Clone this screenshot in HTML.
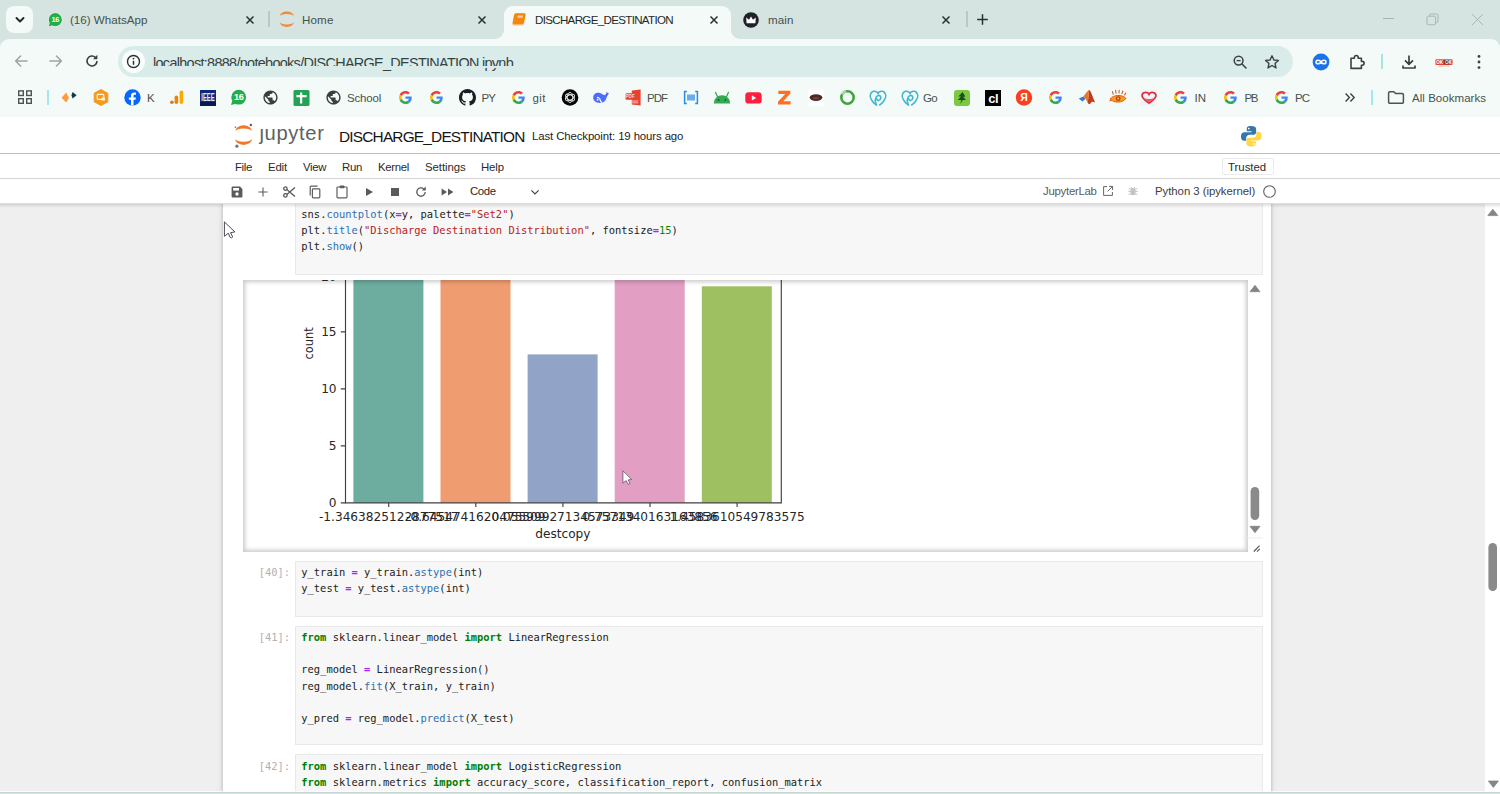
<!DOCTYPE html>
<html lang="en">
<head>
<meta charset="utf-8">
<title>DISCHARGE_DESTINATION</title>
<style>
*{box-sizing:border-box;margin:0;padding:0}
html,body{width:1500px;height:794px;overflow:hidden;background:#fff}
body{position:relative;font-family:"Liberation Sans",sans-serif;color:#1f1f1f}
.abs{position:absolute}
#tabstrip,#navbar,#urlpill,.bm,#page,.tab{opacity:.999}
/* ---------- browser chrome ---------- */
#tabstrip{position:absolute;left:0;top:0;width:1500px;height:50px;background:#d5e4e0}
#navbar{position:absolute;left:0;top:39px;width:1500px;height:41px;background:#f4faf8;border-radius:9px 9px 0 0}
#bmbar{position:absolute;left:0;top:80px;width:1500px;height:36px;background:#f4faf8}
.tab{position:absolute;top:0;height:39px;font-size:11.6px;color:#44514e;white-space:nowrap}
.tab .t{position:absolute;top:12px;left:0;line-height:15px}
.tx{position:absolute;top:13px;width:14px;height:14px}
#urlpill{position:absolute;left:118px;top:45.500px;width:1175px;height:31.500px;border-radius:16px;background:#d9ecea}
.bm{position:absolute;top:89.5px;font-size:11.5px;line-height:16px;color:#46524f;white-space:nowrap}
.ico{position:absolute;display:block}
/* ---------- jupyter ---------- */
#page{position:absolute;left:0;top:116px;width:1500px;height:678px;background:#fff}
#jhead{position:absolute;left:0;top:0;width:1500px;height:38px;background:#fff;border-bottom:1px solid #bdbdbd}
#jmenu{position:absolute;left:0;top:38px;width:1500px;height:25px;background:#fff;border-bottom:1px solid #d5d5d5}
#jtool{position:absolute;left:0;top:63px;width:1500px;height:25px;background:#fff}
#jmain{position:absolute;left:0;top:88px;width:1500px;height:590px;background:#efefef;overflow:hidden}
.mi{position:absolute;top:6px;font-size:11.4px;line-height:15px;color:#2a2a2a}
#nb{position:absolute;left:223px;top:0;width:1048px;height:590px;background:#fff;box-shadow:0 0 2px 1px rgba(0,0,0,.10),0 0 6px 1px rgba(0,0,0,.10)}
.code{position:absolute;left:72px;width:967.600px;background:#f7f7f7;border:1px solid #e9e9e9}
pre{font-family:"DejaVu Sans Mono","Liberation Mono",monospace;font-size:10.43px;line-height:16.050px;color:#212121;white-space:pre}
.code pre{position:absolute;left:5.300px}
.prompt{position:absolute;left:0;width:67px;text-align:right;font-family:"DejaVu Sans Mono","Liberation Mono",monospace;font-size:10.43px;line-height:16.050px;color:#b0b0b0}
.k{color:#008000;font-weight:bold}.o{color:#aa22ff;font-weight:bold}.f{color:#2c6fb3}.s{color:#ba2121}.n{color:#080}
</style>
</head>
<body>
<!-- TABSTRIP -->
<div id="tabstrip">
  <div class="abs" style="left:6px;top:6px;width:27px;height:27px;border-radius:8px;background:#f4faf8"></div>
  <svg class="ico" style="left:14px;top:14px" width="12" height="12" viewBox="0 0 12 12"><path d="M2.5 4 L6 7.5 L9.5 4" fill="none" stroke="#1f2a28" stroke-width="1.9" stroke-linecap="round" stroke-linejoin="round"/></svg>
  <!-- tab 1 -->
  <svg class="ico" style="left:47px;top:12px" width="16" height="16" viewBox="0 0 16 16"><path d="M1 15 L2.2 11 A7 7 0 1 1 5 13.8 Z" fill="#fff"/><circle cx="8.3" cy="7.7" r="6.6" fill="#1fae4b"/><path d="M1.6 14.4 L2.8 10.6 L5.4 13.3 Z" fill="#1fae4b"/><text x="8.3" y="10.3" font-family="Liberation Sans,sans-serif" font-size="7.4" font-weight="bold" fill="#fff" text-anchor="middle" letter-spacing="-0.4">16</text></svg>
  <div class="tab" style="left:70px"><span class="t" id="t1">(16) WhatsApp</span></div>
  <svg class="tx" style="left:243px" viewBox="0 0 14 14"><path d="M3.5 3.5 L10.5 10.5 M10.5 3.5 L3.5 10.5" stroke="#27312f" stroke-width="1.5" fill="none"/></svg>
  <div class="abs" style="left:268px;top:11px;width:1.500px;height:16px;background:#b9c8c4"></div>
  <!-- tab 2 -->
  <svg class="ico" style="left:279px;top:11px" width="16" height="17" viewBox="0 0 16 17"><path d="M0.700 5.600 A7.100 5 0 0 1 14.900 5.600 A7.100 2.600 0 0 0 0.700 5.600 Z" fill="#f38a3a"/><path d="M0.700 10.800 A7.100 5.100 0 0 0 14.900 10.800 A7.100 2.700 0 0 1 0.700 10.800 Z" fill="#f38a3a"/></svg>
  <div class="tab" style="left:302px"><span class="t" id="t2" style="letter-spacing:0.14px;">Home</span></div>
  <svg class="tx" style="left:475px" viewBox="0 0 14 14"><path d="M3.5 3.5 L10.5 10.5 M10.5 3.5 L3.5 10.5" stroke="#27312f" stroke-width="1.5" fill="none"/></svg>
  <!-- active tab -->
  <div class="abs" style="left:504px;top:6px;width:227px;height:34px;background:#f4faf8;border-radius:9px 9px 0 0"></div>
  <svg class="ico" style="left:495px;top:30px" width="9" height="9" viewBox="0 0 9 9"><path d="M9 0 V9 H0 A9 9 0 0 0 9 0 Z" fill="#f4faf8"/></svg>
  <svg class="ico" style="left:731px;top:30px" width="9" height="9" viewBox="0 0 9 9"><path d="M0 0 V9 H9 A9 9 0 0 1 0 0 Z" fill="#f4faf8"/></svg>
  <svg class="ico" style="left:511px;top:12px" width="16" height="16" viewBox="0 0 16 16"><g transform="translate(1.100 0) skewX(-11)"><rect x="2.600" y="1.200" width="11.400" height="12.400" rx="1.700" fill="#f9c48a"/><rect x="2.600" y="1.200" width="11.400" height="11" rx="1.700" fill="#f5870f"/><rect x="6.400" y="3.400" width="5.200" height="2.400" rx="0.500" fill="#fbd2a4"/></g></svg>
  <div class="tab" style="left:535px;color:#1f2a28"><span class="t" id="t3" style="letter-spacing:-0.69px;">DISCHARGE_DESTINATION</span></div>
  <svg class="tx" style="left:707px" viewBox="0 0 14 14"><path d="M3.5 3.5 L10.5 10.5 M10.5 3.5 L3.5 10.5" stroke="#27312f" stroke-width="1.5" fill="none"/></svg>
  <!-- tab 4 -->
  <svg class="ico" style="left:743px;top:12px" width="16" height="16" viewBox="0 0 16 16"><circle cx="8" cy="8" r="7.8" fill="#20222b"/><path d="M3.6 11.2 L3.2 5.6 L6 7.8 L8 4.4 L10 7.8 L12.8 5.6 L12.4 11.2 Z" fill="#fff"/></svg>
  <div class="tab" style="left:768px"><span class="t" id="t4" style="letter-spacing:0.09px;">main</span></div>
  <svg class="tx" style="left:939px" viewBox="0 0 14 14"><path d="M3.5 3.5 L10.5 10.5 M10.5 3.5 L3.5 10.5" stroke="#27312f" stroke-width="1.5" fill="none"/></svg>
  <div class="abs" style="left:966px;top:11px;width:1.500px;height:16px;background:#b9c8c4"></div>
  <svg class="ico" style="left:975px;top:12px" width="15" height="15" viewBox="0 0 15 15"><path d="M7.5 2.2 V12.8 M2.2 7.5 H12.8" stroke="#27312f" stroke-width="1.5" fill="none"/></svg>
  <!-- window controls -->
  <div class="abs" style="left:1383px;top:18px;width:11px;height:1px;background:#a9b5b2"></div>
  <svg class="ico" style="left:1426px;top:13px" width="13" height="13" viewBox="0 0 13 13"><rect x="1" y="3.2" width="8.6" height="8.6" rx="1.6" fill="none" stroke="#a9b5b2" stroke-width="1"/><path d="M3.4 3.2 V2.6 A1.6 1.6 0 0 1 5 1 H10.4 A1.6 1.6 0 0 1 12 2.6 V8 A1.6 1.6 0 0 1 10.4 9.6 H9.8" fill="none" stroke="#a9b5b2" stroke-width="1"/></svg>
  <svg class="ico" style="left:1471px;top:13px" width="13" height="13" viewBox="0 0 13 13"><path d="M1 1 L12 12 M12 1 L1 12" stroke="#a9b5b2" stroke-width="1" fill="none"/></svg>
</div>
<!-- NAVBAR -->
<div id="navbar">
  <svg class="ico" style="left:13px;top:14px" width="16" height="16" viewBox="0 0 16 16"><path d="M14 8 H2.6 M7.6 3 L2.6 8 L7.6 13" fill="none" stroke="#9aa6a3" stroke-width="1.5" stroke-linecap="round" stroke-linejoin="round"/></svg>
  <svg class="ico" style="left:48px;top:14px" width="16" height="16" viewBox="0 0 16 16"><path d="M2 8 H13.4 M8.4 3 L13.4 8 L8.4 13" fill="none" stroke="#9aa6a3" stroke-width="1.5" stroke-linecap="round" stroke-linejoin="round"/></svg>
  <svg class="ico" style="left:84px;top:14px" width="16" height="16" viewBox="0 0 16 16"><path d="M13 8 A5 5 0 1 1 11.4 4.3" fill="none" stroke="#39423f" stroke-width="1.6"/><path d="M13.4 1.8 V6.2 H9 Z" fill="#39423f"/></svg>
  <!-- right icons -->
  <svg class="ico" style="left:1311.500px;top:14px" width="18" height="18" viewBox="0 0 18 18"><circle cx="9" cy="9" r="8.4" fill="#1a73e8"/><path d="M9 9 C7.6 6.6 4 6.6 4 9 C4 11.4 7.6 11.4 9 9 C10.4 6.6 14 6.6 14 9 C14 11.4 10.4 11.4 9 9 Z" fill="none" stroke="#fff" stroke-width="1.5"/></svg>
  <svg class="ico" style="left:1347.500px;top:14px" width="18" height="18" viewBox="0 0 18 18"><path d="M3 5.2 H6.4 V4.4 A1.9 1.9 0 0 1 10.2 4.4 V5.2 H13.4 V8.4 H14.2 A1.9 1.9 0 0 1 14.2 12.2 H13.4 V15.4 H3 Z" fill="none" stroke="#39423f" stroke-width="1.6" stroke-linejoin="round"/></svg>
  <div class="abs" style="left:1380.500px;top:15px;width:2px;height:15px;background:#a6e6e1"></div>
  <svg class="ico" style="left:1399.500px;top:14px" width="18" height="18" viewBox="0 0 18 18"><path d="M9 2.4 V11 M5 7.4 L9 11.4 L13 7.4 M3 12.6 V15 H15 V12.6" fill="none" stroke="#39423f" stroke-width="1.7" stroke-linejoin="round"/></svg>
  <svg class="ico" style="left:1434.500px;top:18.500px" width="18" height="9" viewBox="0 0 20 10"><rect x="0.5" y="1.4" width="19" height="6.4" rx="1" fill="#e8452f"/><rect x="10.4" y="2.2" width="5.4" height="4.8" fill="#30302f"/><text x="1.4" y="6.7" font-family="Liberation Sans,sans-serif" font-size="5" font-weight="bold" fill="#fff">OK</text><text x="11" y="6.7" font-family="Liberation Sans,sans-serif" font-size="5" font-weight="bold" fill="#fff">OK</text><rect x="4" y="8.4" width="12" height="1" fill="#f4b4a8"/></svg>
  <svg class="ico" style="left:1475.500px;top:14px" width="6" height="18" viewBox="0 0 6 18"><circle cx="3" cy="3.4" r="1.4" fill="#39423f"/><circle cx="3" cy="9" r="1.4" fill="#39423f"/><circle cx="3" cy="14.6" r="1.4" fill="#39423f"/></svg>
</div>
<div id="urlpill">
  <div class="abs" style="left:4px;top:4.5px;width:23px;height:23px;border-radius:12px;background:#f9fdfc"></div>
  <svg class="ico" style="left:8px;top:8.5px" width="15" height="15" viewBox="0 0 15 15"><circle cx="7.5" cy="7.5" r="6" fill="none" stroke="#2a3331" stroke-width="1.4"/><path d="M7.5 6.8 V10.8" stroke="#2a3331" stroke-width="1.5"/><circle cx="7.5" cy="4.6" r="0.9" fill="#2a3331"/></svg>
  <div class="abs" id="url" style="letter-spacing:-0.67px;left:35px;top:9.5px;font-size:14.400px;line-height:17px;color:#36423f;white-space:nowrap">localhost:8888/notebooks/DISCHARGE_DESTINATION.ipynb</div>
  <div class="abs" style="left:33px;top:20.8px;width:366px;height:2px;background:#d9ecea"></div>
  <svg class="ico" style="left:1113.500px;top:8.5px" width="16" height="16" viewBox="0 0 16 16"><circle cx="6.6" cy="6.6" r="4.4" fill="none" stroke="#39423f" stroke-width="1.5"/><path d="M10 10 L14 14" stroke="#39423f" stroke-width="1.6" stroke-linecap="round"/><path d="M4.6 6.6 H8.6" stroke="#39423f" stroke-width="1.3"/></svg>
  <svg class="ico" style="left:1145.500px;top:8.5px" width="16" height="16" viewBox="0 0 16 16"><path d="M8 1.8 L9.9 6 L14.4 6.4 L11 9.4 L12 13.9 L8 11.5 L4 13.9 L5 9.4 L1.6 6.4 L6.1 6 Z" fill="none" stroke="#39423f" stroke-width="1.4" stroke-linejoin="round"/></svg>
</div>
<!-- BOOKMARKS -->
<div id="bmbar"></div>
<svg class="ico" style="left:17px;top:89px" width="16" height="16" viewBox="0 0 16 16"><g fill="none" stroke="#4a5552" stroke-width="1.4"><rect x="1.7" y="1.9" width="4.6" height="4.6"/><rect x="9.7" y="1.9" width="4.6" height="4.6"/><rect x="1.7" y="9.7" width="4.6" height="4.6"/><rect x="9.7" y="9.7" width="4.6" height="4.6"/></g></svg>
<div class="abs" style="left:47px;top:90px;width:2px;height:15px;background:#a4e8e8"></div>
<svg class="ico" style="left:60px;top:89px" width="20" height="17" viewBox="0 0 20 17"><path d="M1.6 8.800 L6.200 3.600 L9 8.800 L6.200 13.600 Z" fill="#ff9a3d"/><path d="M12.600 3 L16.600 6.200 L12.600 9.400 L11.400 6.200 Z" fill="#123a45"/></svg>
<svg class="ico" style="left:93px;top:89px" width="16" height="17" viewBox="0 0 16 17"><path d="M8 0.600 L14.800 4.200 V12.800 L8 16.400 L1.200 12.800 V4.200 Z" fill="#f39a1f" stroke="#f39a1f" stroke-width="1" stroke-linejoin="round"/><rect x="4.200" y="5.400" width="6.600" height="5" rx="0.800" fill="none" stroke="#fff3dc" stroke-width="1.100"/><rect x="8.400" y="8.600" width="3.600" height="3" rx="0.600" fill="#fff3dc"/></svg>
<svg class="ico" style="left:124px;top:89px" width="17" height="17" viewBox="0 0 17 17"><circle cx="8.500" cy="8.500" r="8.200" fill="#0866ff"/><path d="M9.500 16.600 V10.700 H11.500 L11.900 8.400 H9.500 V7 C9.500 6.200 9.900 5.800 10.800 5.800 H12 V3.800 C11.500 3.700 10.900 3.600 10.200 3.600 C8.200 3.600 7 4.800 7 6.800 V8.400 H4.900 V10.700 H7 V16.600 Z" fill="#fff"/></svg>
<div class="bm" id="bK" style="left:147px">K</div>
<svg class="ico" style="left:169px;top:89px" width="16" height="16" viewBox="0 0 16 16"><rect x="10.600" y="1.400" width="3.600" height="13.600" rx="1.800" fill="#f9ab00"/><rect x="5.600" y="6.400" width="3.600" height="8.600" rx="1.800" fill="#e8830c"/><circle cx="2.900" cy="13.200" r="1.800" fill="#e8710a"/></svg>
<svg class="ico" style="left:200px;top:90px" width="16" height="16" viewBox="0 0 16 16"><rect width="16" height="16" fill="#0b2a7a"/><rect y="12" width="16" height="4" fill="#071a52"/><text transform="translate(8 11.400) scale(1 1.450)" font-family="Liberation Sans,sans-serif" font-size="7.400" font-weight="bold" fill="#e6ecff" text-anchor="middle" textLength="13.400" lengthAdjust="spacingAndGlyphs">IEEE</text></svg>
<svg class="ico" style="left:230px;top:89px" width="17" height="17" viewBox="0 0 17 17"><circle cx="8.700" cy="8.200" r="7.400" fill="#1fae4b"/><path d="M1 16 L2.400 11.400 L5.800 14.800 Z" fill="#1fae4b"/><text x="8.700" y="11.400" font-family="Liberation Sans,sans-serif" font-size="9.200" font-weight="bold" fill="#fff" text-anchor="middle" letter-spacing="-0.500">16</text></svg>
<svg class="ico" style="left:261.5px;top:89px" width="17" height="17" viewBox="0 0 24 24"><path fill="#3a3f3e" d="M12 2C6.480 2 2 6.480 2 12s4.480 10 10 10 10-4.480 10-10S17.520 2 12 2zm-1 17.930c-3.950-.49-7-3.850-7-7.930 0-.62.080-1.210.210-1.790L9 15v1c0 1.100.9 2 2 2v1.930zm6.900-2.540c-.26-.81-1-1.390-1.900-1.390h-1v-3c0-.55-.45-1-1-1H8v-2h2c.55 0 1-.45 1-1V7h2c1.100 0 2-.9 2-2v-.41c2.930 1.190 5 4.060 5 7.410 0 2.080-.8 3.970-2.100 5.390z"/></svg>
<svg class="ico" style="left:293px;top:90px" width="17" height="16" viewBox="0 0 17 16"><rect x="0.500" y="0" width="16" height="16" rx="1.600" fill="#23a455"/><path d="M8.100 2.600 V13.600 M3.400 6.200 H13.600" stroke="#fff" stroke-width="2.200"/></svg>
<svg class="ico" style="left:324.5px;top:89px" width="17" height="17" viewBox="0 0 24 24"><path fill="#3a3f3e" d="M12 2C6.480 2 2 6.480 2 12s4.480 10 10 10 10-4.480 10-10S17.520 2 12 2zm-1 17.930c-3.950-.49-7-3.850-7-7.930 0-.62.080-1.210.210-1.790L9 15v1c0 1.100.9 2 2 2v1.930zm6.900-2.540c-.26-.81-1-1.390-1.900-1.390h-1v-3c0-.55-.45-1-1-1H8v-2h2c.55 0 1-.45 1-1V7h2c1.100 0 2-.9 2-2v-.41c2.930 1.190 5 4.060 5 7.410 0 2.080-.8 3.970-2.100 5.390z"/></svg>
<div class="bm" id="bSchool" style="letter-spacing:-0.19px;left:347px">School</div>
<svg class="ico" style="left:398.5px;top:91px" width="13" height="13" viewBox="0 0 48 48"><path fill="#EA4335" d="M24 9.500c3.540 0 6.710 1.220 9.210 3.600l6.850-6.850C35.900 2.380 30.470 0 24 0 14.620 0 6.510 5.380 2.560 13.220l7.980 6.190C12.430 13.720 17.740 9.500 24 9.500z"/><path fill="#4285F4" d="M46.980 24.550c0-1.570-.15-3.090-.38-4.550H24v9.020h12.940c-.58 2.960-2.260 5.480-4.780 7.180l7.730 6c4.510-4.180 7.090-10.360 7.090-17.650z"/><path fill="#FBBC05" d="M10.530 28.590c-.48-1.450-.76-2.990-.76-4.590s.27-3.140.76-4.590l-7.980-6.190C.92 16.460 0 20.120 0 24c0 3.880.92 7.540 2.560 10.780l7.970-6.190z"/><path fill="#34A853" d="M24 48c6.480 0 11.930-2.130 15.890-5.810l-7.730-6c-2.150 1.450-4.920 2.300-8.160 2.300-6.260 0-11.570-4.220-13.470-9.910l-7.980 6.190C6.510 42.620 14.620 48 24 48z"/></svg>
<svg class="ico" style="left:430.0px;top:91px" width="13" height="13" viewBox="0 0 48 48"><path fill="#EA4335" d="M24 9.500c3.540 0 6.710 1.220 9.210 3.600l6.850-6.850C35.900 2.380 30.470 0 24 0 14.620 0 6.510 5.380 2.560 13.220l7.980 6.190C12.430 13.720 17.740 9.500 24 9.500z"/><path fill="#4285F4" d="M46.980 24.550c0-1.570-.15-3.090-.38-4.550H24v9.020h12.940c-.58 2.960-2.260 5.480-4.780 7.180l7.730 6c4.510-4.180 7.090-10.360 7.090-17.650z"/><path fill="#FBBC05" d="M10.530 28.590c-.48-1.450-.76-2.990-.76-4.590s.27-3.140.76-4.590l-7.980-6.190C.92 16.460 0 20.120 0 24c0 3.880.92 7.540 2.560 10.780l7.970-6.190z"/><path fill="#34A853" d="M24 48c6.480 0 11.930-2.130 15.890-5.810l-7.730-6c-2.150 1.450-4.920 2.300-8.160 2.300-6.260 0-11.570-4.220-13.470-9.910l-7.980 6.190C6.510 42.620 14.620 48 24 48z"/></svg>
<svg class="ico" style="left:459px;top:89px" width="17" height="17" viewBox="0 0 16 16"><path fill="#1b1f23" d="M8 0C3.580 0 0 3.580 0 8c0 3.540 2.290 6.530 5.470 7.590.4.070.55-.17.55-.38 0-.19-.010-.82-.010-1.490-2.010.37-2.530-.49-2.690-.94-.090-.23-.48-.94-.82-1.130-.28-.15-.68-.52-.010-.53.63-.010 1.080.58 1.230.82.720 1.210 1.870.87 2.330.66.070-.52.28-.87.510-1.070-1.780-.2-3.640-.89-3.640-3.950 0-.87.310-1.590.82-2.150-.080-.2-.36-1.020.080-2.120 0 0 .67-.21 2.200.82.640-.18 1.320-.27 2-.27.680 0 1.360.090 2 .27 1.530-1.040 2.200-.82 2.200-.82.440 1.100.16 1.920.080 2.120.510.560.82 1.270.82 2.150 0 3.070-1.870 3.750-3.650 3.950.29.250.54.730.54 1.480 0 1.070-.010 1.930-.010 2.200 0 .21.15.46.55.38A8.013 8.013 0 0016 8c0-4.420-3.580-8-8-8z"/></svg>
<div class="bm" id="bPY" style="letter-spacing:-0.93px;left:481.5px">PY</div>
<svg class="ico" style="left:512.0px;top:91px" width="13" height="13" viewBox="0 0 48 48"><path fill="#EA4335" d="M24 9.500c3.540 0 6.710 1.220 9.210 3.600l6.850-6.850C35.900 2.380 30.470 0 24 0 14.620 0 6.510 5.380 2.560 13.220l7.980 6.190C12.430 13.720 17.740 9.500 24 9.500z"/><path fill="#4285F4" d="M46.980 24.550c0-1.570-.15-3.090-.38-4.550H24v9.020h12.940c-.58 2.960-2.260 5.480-4.780 7.180l7.730 6c4.510-4.180 7.090-10.360 7.090-17.650z"/><path fill="#FBBC05" d="M10.530 28.590c-.48-1.450-.76-2.990-.76-4.590s.27-3.140.76-4.590l-7.980-6.190C.92 16.460 0 20.120 0 24c0 3.880.92 7.540 2.560 10.780l7.970-6.190z"/><path fill="#34A853" d="M24 48c6.480 0 11.930-2.130 15.890-5.810l-7.730-6c-2.150 1.450-4.920 2.300-8.160 2.300-6.260 0-11.570-4.220-13.470-9.910l-7.980 6.190C6.510 42.620 14.620 48 24 48z"/></svg>
<div class="bm" id="bgit" style="letter-spacing:0.45px;left:532.5px">git</div>
<svg class="ico" style="left:561px;top:89px" width="18" height="17" viewBox="0 0 18 17"><circle cx="9" cy="8.500" r="8.300" fill="#050505"/><g fill="none" stroke="#e8e8e8" stroke-width="0.900"><ellipse cx="9" cy="8.500" rx="2.600" ry="5"/><ellipse cx="9" cy="8.500" rx="2.600" ry="5" transform="rotate(60 9 8.500)"/><ellipse cx="9" cy="8.500" rx="2.600" ry="5" transform="rotate(120 9 8.500)"/></g></svg>
<svg class="ico" style="left:592px;top:89px" width="18" height="17" viewBox="0 0 18 17"><path d="M1.200 8.800 C1.200 5.200 4 3.400 7 3.800 C9.600 4.100 10.800 6 12.400 6 C13.800 6 14.600 4.600 14.400 2.800 C15.400 3.600 15.800 4.200 16.800 4 C16.400 6.400 15 7 14.600 8.400 C13.800 11.400 11.800 14 8 14 C4.200 14 1.200 12 1.200 8.800 Z" fill="#4d6bfe"/><path d="M5 8.600 C6.400 8.200 8 9.400 8.400 11.600 C8.600 12.600 9.400 13.200 10.200 13.600" fill="none" stroke="#f4faf8" stroke-width="1.300"/><circle cx="5.600" cy="10.800" r="1" fill="#f4faf8"/></svg>
<svg class="ico" style="left:625px;top:89px" width="17" height="17" viewBox="0 0 17 17"><path d="M6.800 1.600 L15.600 0.600 V16.400 L6.800 15.400 Z" fill="#e8412e"/><rect x="0.600" y="4.200" width="9" height="6.600" rx="0.800" fill="#e8412e"/><text x="5.100" y="9.300" font-family="Liberation Sans,sans-serif" font-size="4.600" font-weight="bold" fill="#ffd9d2" text-anchor="middle">PDF</text><path d="M6.800 12 H13.200 M6.800 13.800 H13.200" stroke="#ffd9d2" stroke-width="0.800"/></svg>
<div class="bm" id="bPDF" style="letter-spacing:-1.00px;left:647px">PDF</div>
<svg class="ico" style="left:683px;top:90px" width="16" height="15" viewBox="0 0 16 15"><g fill="none" stroke="#2b8ae6" stroke-width="1.500"><path d="M3.800 1.400 H1.600 V13.600 H3.800"/><path d="M12.200 1.400 H14.400 V13.600 H12.200"/></g><path d="M5 4.400 V10.600 M7 4.400 V10.600 M9 4.400 V10.600 M11 4.400 V10.600" stroke="#2b8ae6" stroke-width="1.400"/></svg>
<svg class="ico" style="left:713px;top:91px" width="18" height="13" viewBox="0 0 18 13"><path d="M0.800 12.400 A8.200 8.200 0 0 1 17.200 12.400 Z" fill="#34a853"/><path d="M4.400 5.400 L2.600 1.400 M13.600 5.400 L15.400 1.400" stroke="#34a853" stroke-width="1.300" stroke-linecap="round"/><circle cx="5.600" cy="9" r="0.900" fill="#0b5a2a"/><circle cx="12.400" cy="9" r="0.900" fill="#0b5a2a"/></svg>
<svg class="ico" style="left:745px;top:92px" width="17" height="12" viewBox="0 0 17 12"><rect x="0.300" y="0.200" width="16.400" height="11.400" rx="3.400" fill="#ff1f3d"/><path d="M6.800 3.200 L11.200 5.900 L6.800 8.600 Z" fill="#fff"/></svg>
<svg class="ico" style="left:777px;top:90px" width="15" height="15" viewBox="0 0 15 15"><path d="M1.400 0.800 H13.400 V3.400 L6.200 11.200 H13.600 V14.400 H1 V11.800 L8.200 4 H1.400 Z" fill="#ff6f20"/></svg>
<svg class="ico" style="left:808px;top:90px" width="16" height="16" viewBox="0 0 16 16"><rect width="16" height="16" fill="#ffffff"/><ellipse cx="8" cy="7.600" rx="6.400" ry="3.400" fill="#4a2c25"/><ellipse cx="8" cy="8.200" rx="3" ry="1" fill="#7a4a3e"/></svg>
<svg class="ico" style="left:839px;top:89px" width="17" height="17" viewBox="0 0 17 17"><circle cx="8.500" cy="8.500" r="6.200" fill="none" stroke="#3fa63f" stroke-width="2.600"/><path d="M2.800 5.400 A6.400 6.400 0 0 1 7 2.200" fill="none" stroke="#a8dba8" stroke-width="2.600"/></svg>
<svg class="ico" style="left:869px;top:90px" width="18" height="16" viewBox="0 0 18 16"><g fill="none" stroke="#3cb7d3" stroke-width="1.600" stroke-linecap="round"><path d="M9 3.400 C7.600 1 4.400 0.600 2.600 2.400 C0.400 4.600 1.200 8.600 3.600 11.600 C5 13.400 6.600 14.600 7.400 15"/><path d="M9 3.400 C10.400 1 13.600 0.600 15.400 2.400 C17.600 4.600 16.800 8.600 14.400 11.600 C13 13.400 11.400 14.600 10.600 15"/><path d="M7.400 15 C5.400 11 6.400 6.600 9 5.600 C11.400 4.800 12.600 7.600 11 9.600 C9.800 11 8 10.600 8 9"/></g></svg>
<svg class="ico" style="left:900.5px;top:90px" width="18" height="16" viewBox="0 0 18 16"><g fill="none" stroke="#3cb7d3" stroke-width="1.600" stroke-linecap="round"><path d="M9 3.400 C7.600 1 4.400 0.600 2.600 2.400 C0.400 4.600 1.200 8.600 3.600 11.600 C5 13.400 6.600 14.600 7.400 15"/><path d="M9 3.400 C10.400 1 13.600 0.600 15.400 2.400 C17.600 4.600 16.800 8.600 14.400 11.600 C13 13.400 11.400 14.600 10.600 15"/><path d="M7.400 15 C5.400 11 6.400 6.600 9 5.600 C11.400 4.800 12.600 7.600 11 9.600 C9.800 11 8 10.600 8 9"/></g></svg>
<div class="bm" id="bGo" style="letter-spacing:-0.68px;left:923px">Go</div>
<svg class="ico" style="left:954px;top:90px" width="16" height="16" viewBox="0 0 16 16"><rect width="16" height="16" rx="3.200" fill="#7bc843"/><path d="M8.600 2 L4.400 6.400 H7 L3.800 10 H7.200 L6.400 14 L8.200 11 L8.600 10 H12 L9 6.800 H11.400 Z" fill="#1f4d18"/></svg>
<svg class="ico" style="left:985px;top:90px" width="16" height="16" viewBox="0 0 16 16"><rect width="16" height="16" fill="#000"/><text x="8.200" y="12.600" font-family="Liberation Sans,sans-serif" font-size="13" font-weight="bold" fill="#fff" text-anchor="middle" letter-spacing="-0.500">cl</text></svg>
<svg class="ico" style="left:1015px;top:89px" width="18" height="17" viewBox="0 0 18 17"><circle cx="9" cy="8.500" r="8.200" fill="#fc3f1d"/><text x="9" y="12.400" font-family="Liberation Sans,sans-serif" font-size="10.500" font-weight="bold" fill="#fff" text-anchor="middle">Я</text></svg>
<svg class="ico" style="left:1048.5px;top:91px" width="13" height="13" viewBox="0 0 48 48"><path fill="#EA4335" d="M24 9.500c3.540 0 6.710 1.220 9.210 3.600l6.850-6.850C35.900 2.380 30.470 0 24 0 14.620 0 6.510 5.380 2.560 13.220l7.980 6.190C12.430 13.720 17.740 9.500 24 9.500z"/><path fill="#4285F4" d="M46.980 24.550c0-1.570-.15-3.090-.38-4.550H24v9.020h12.940c-.58 2.960-2.260 5.480-4.780 7.180l7.730 6c4.510-4.180 7.090-10.360 7.090-17.650z"/><path fill="#FBBC05" d="M10.530 28.590c-.48-1.450-.76-2.990-.76-4.590s.27-3.140.76-4.590l-7.980-6.190C.92 16.460 0 20.120 0 24c0 3.880.92 7.540 2.560 10.780l7.970-6.190z"/><path fill="#34A853" d="M24 48c6.480 0 11.930-2.130 15.890-5.810l-7.730-6c-2.150 1.450-4.920 2.300-8.160 2.300-6.260 0-11.570-4.220-13.470-9.910l-7.980 6.190C6.510 42.620 14.620 48 24 48z"/></svg>
<svg class="ico" style="left:1078px;top:89px" width="18" height="17" viewBox="0 0 18 17"><path d="M0.800 9.600 L5.400 7.400 L7.600 9.800 L4.400 12.400 Z" fill="#3a78c2"/><path d="M5.400 7.400 C7.600 5.400 9.400 1.400 11.200 1 L9.600 13.800 L7.600 9.800 Z" fill="#e8762c"/><path d="M11.200 1 C12.800 1.600 15 9 17.200 13.400 C15.400 12.600 14 12 12.600 14.200 C11.800 15.600 10.600 15.200 9.600 13.800 Z" fill="#c43a1d"/><path d="M11.200 1 L9.600 13.800 C10.400 11 10.800 5 11.200 1 Z" fill="#f6c14a"/></svg>
<svg class="ico" style="left:1109px;top:89px" width="18" height="17" viewBox="0 0 18 17"><path d="M1.200 10 C4.400 5.600 13 5.200 17 9.400 C13.600 14 4.800 14.400 1.200 10 Z" fill="#f7a21b" stroke="#e2571c" stroke-width="1"/><circle cx="9.200" cy="9.600" r="2.400" fill="#c2331a"/><circle cx="9.200" cy="9.600" r="1" fill="#ffd36a"/><path d="M4.200 5.200 L3.400 2.600 M7 4.200 L6.600 1.400 M10 4 L10.200 1.200 M13 4.600 L13.800 2 M15.600 6 L16.800 4" stroke="#e2571c" stroke-width="1.100" stroke-linecap="round"/><path d="M1.200 10 L0.400 12.600 L3 11.600" fill="#e2571c"/></svg>
<svg class="ico" style="left:1140px;top:89px" width="18" height="17" viewBox="0 0 18 17"><rect x="1" y="0.500" width="16" height="16" fill="#f1f1f6"/><path d="M9 5.400 C7.600 2.600 2.400 2.800 2 6.400 C1.800 9.400 6 11.800 9 14.200 C12 11.800 16.200 9.400 16 6.400 C15.600 2.800 10.400 2.600 9 5.400 Z" fill="none" stroke="#e0283c" stroke-width="1.700"/><path d="M4 8.600 C6 10.600 12 10.600 14 8.600 C12.800 11 10.800 12.200 9 13.200 C7.200 12.200 5.200 11 4 8.600 Z" fill="#e85a6c"/></svg>
<svg class="ico" style="left:1174.0px;top:91px" width="13" height="13" viewBox="0 0 48 48"><path fill="#EA4335" d="M24 9.500c3.540 0 6.710 1.220 9.210 3.600l6.850-6.850C35.900 2.380 30.470 0 24 0 14.620 0 6.510 5.380 2.560 13.220l7.980 6.190C12.430 13.720 17.740 9.500 24 9.500z"/><path fill="#4285F4" d="M46.980 24.550c0-1.570-.15-3.090-.38-4.550H24v9.020h12.940c-.58 2.960-2.260 5.480-4.780 7.180l7.730 6c4.510-4.180 7.090-10.360 7.090-17.650z"/><path fill="#FBBC05" d="M10.530 28.590c-.48-1.450-.76-2.990-.76-4.590s.27-3.140.76-4.590l-7.980-6.190C.92 16.460 0 20.120 0 24c0 3.880.92 7.540 2.560 10.780l7.970-6.190z"/><path fill="#34A853" d="M24 48c6.480 0 11.930-2.130 15.890-5.810l-7.730-6c-2.150 1.450-4.920 2.300-8.160 2.300-6.260 0-11.570-4.220-13.470-9.910l-7.980 6.190C6.510 42.620 14.620 48 24 48z"/></svg>
<div class="bm" id="bIN" style="left:1194.5px">IN</div>
<svg class="ico" style="left:1223.5px;top:91px" width="13" height="13" viewBox="0 0 48 48"><path fill="#EA4335" d="M24 9.500c3.540 0 6.710 1.220 9.210 3.600l6.850-6.850C35.900 2.380 30.470 0 24 0 14.620 0 6.510 5.380 2.560 13.220l7.980 6.190C12.430 13.720 17.740 9.500 24 9.500z"/><path fill="#4285F4" d="M46.980 24.550c0-1.570-.15-3.090-.38-4.550H24v9.020h12.940c-.58 2.960-2.260 5.480-4.780 7.180l7.730 6c4.510-4.180 7.090-10.360 7.090-17.650z"/><path fill="#FBBC05" d="M10.530 28.590c-.48-1.450-.76-2.990-.76-4.590s.27-3.140.76-4.590l-7.980-6.190C.92 16.460 0 20.120 0 24c0 3.880.92 7.540 2.560 10.780l7.970-6.190z"/><path fill="#34A853" d="M24 48c6.480 0 11.930-2.130 15.890-5.810l-7.730-6c-2.150 1.450-4.920 2.300-8.160 2.300-6.260 0-11.570-4.220-13.470-9.910l-7.980 6.190C6.510 42.620 14.620 48 24 48z"/></svg>
<div class="bm" id="bPB" style="letter-spacing:-1.43px;left:1244.5px">PB</div>
<svg class="ico" style="left:1274.5px;top:91px" width="13" height="13" viewBox="0 0 48 48"><path fill="#EA4335" d="M24 9.500c3.540 0 6.710 1.220 9.210 3.600l6.850-6.850C35.900 2.380 30.470 0 24 0 14.620 0 6.510 5.380 2.560 13.220l7.980 6.190C12.430 13.720 17.740 9.500 24 9.500z"/><path fill="#4285F4" d="M46.980 24.550c0-1.570-.15-3.090-.38-4.550H24v9.020h12.940c-.58 2.960-2.260 5.480-4.780 7.180l7.730 6c4.510-4.180 7.090-10.360 7.090-17.650z"/><path fill="#FBBC05" d="M10.530 28.590c-.48-1.450-.76-2.990-.76-4.590s.27-3.140.76-4.590l-7.980-6.190C.92 16.460 0 20.120 0 24c0 3.880.92 7.540 2.560 10.780l7.970-6.190z"/><path fill="#34A853" d="M24 48c6.480 0 11.930-2.130 15.890-5.810l-7.730-6c-2.150 1.450-4.920 2.300-8.160 2.300-6.260 0-11.570-4.220-13.470-9.910l-7.980 6.190C6.510 42.620 14.620 48 24 48z"/></svg>
<div class="bm" id="bPC" style="letter-spacing:-0.99px;left:1295px">PC</div>
<svg class="ico" style="left:1344px;top:92px" width="12" height="11" viewBox="0 0 12 11"><path d="M1.600 1.600 L5.400 5.500 L1.600 9.400 M6.400 1.600 L10.200 5.500 L6.400 9.400" fill="none" stroke="#39423f" stroke-width="1.400"/></svg>
<div class="abs" style="left:1371px;top:90px;width:2px;height:15px;background:#a4e8e8"></div>
<svg class="ico" style="left:1387px;top:90px" width="18" height="15" viewBox="0 0 18 15"><path d="M1.600 3 A1.200 1.200 0 0 1 2.800 1.800 H6.800 L8.600 3.600 H15.200 A1.200 1.200 0 0 1 16.400 4.800 V12 A1.200 1.200 0 0 1 15.200 13.200 H2.800 A1.200 1.200 0 0 1 1.600 12 Z" fill="none" stroke="#4a5552" stroke-width="1.500"/></svg>
<div class="bm" id="bAll" style="letter-spacing:0.04px;left:1412px">All Bookmarks</div>
<!-- PAGE -->
<div id="page">
  <div id="jhead">
    <svg class="ico" style="left:233px;top:7px" width="22" height="26" viewBox="0 0 22 26"><path d="M2 8.700 A8.600 6.400 0 0 1 19.200 8.700 A8.600 3.100 0 0 0 2 8.700 Z" fill="#f37726"/><path d="M2 15.800 A8.600 6.100 0 0 0 19.200 15.800 A8.600 2.900 0 0 1 2 15.800 Z" fill="#f37726"/><circle cx="17.900" cy="2.100" r="1.250" fill="#616161"/><circle cx="3.900" cy="23.200" r="1.600" fill="#757575"/><circle cx="2.400" cy="4.200" r="0.850" fill="#8e8e8e"/></svg>
    <div class="abs" id="jlogo" style="letter-spacing:0.63px;left:259.500px;top:4.200px;font-size:20.200px;line-height:26px;color:#5f5f5f;white-space:nowrap">jupyter</div>
    <div class="abs" style="left:259.500px;top:6px;width:6.500px;height:6.800px;background:#fff"></div>
    <div class="abs" id="jtitle" style="letter-spacing:-0.80px;left:339px;top:11.500px;font-size:15.400px;line-height:18px;color:#161616;white-space:nowrap">DISCHARGE_DESTINATION</div>
    <div class="abs" id="jchk" style="letter-spacing:-0.11px;left:532px;top:12.600px;font-size:11.400px;line-height:14px;color:#1c1c1c;white-space:nowrap">Last Checkpoint: 19 hours ago</div>
    <svg class="ico" style="left:1240px;top:8.500px" width="22.500" height="22.500" viewBox="0 0 24 24"><path d="M11.800 1 C8 1 7.200 2.400 7.200 4.200 V6.600 H12.200 V7.600 H4.800 C2.600 7.600 1 9.200 1 12.200 C1 15.200 2.400 16.800 4.400 16.800 H6.600 V13.800 C6.600 11.800 8.200 10.400 10 10.400 H14.600 C16.200 10.400 17.200 9.200 17.200 7.800 V4.200 C17.200 2.400 15.600 1 11.800 1 Z" fill="#3776ab"/><circle cx="9.400" cy="3.800" r="0.950" fill="#fff"/><path d="M12.200 23 C16 23 16.800 21.600 16.800 19.800 V17.400 H11.800 V16.400 H19.200 C21.400 16.400 23 14.800 23 11.800 C23 8.800 21.600 7.200 19.600 7.200 H17.400 V10.200 C17.400 12.200 15.800 13.600 14 13.600 H9.400 C7.800 13.600 6.800 14.800 6.800 16.200 V19.800 C6.800 21.600 8.400 23 12.200 23 Z" fill="#ffd646"/><circle cx="14.600" cy="20.200" r="0.950" fill="#fff"/></svg>
  </div>
  <div id="jmenu">
    <div class="mi" id="m1" style="letter-spacing:-0.34px;left:235px">File</div>
    <div class="mi" id="m2" style="letter-spacing:-0.16px;left:268px">Edit</div>
    <div class="mi" id="m3" style="letter-spacing:-0.37px;left:303px">View</div>
    <div class="mi" id="m4" style="letter-spacing:-0.30px;left:342px">Run</div>
    <div class="mi" id="m5" style="letter-spacing:-0.32px;left:378px">Kernel</div>
    <div class="mi" id="m6" style="letter-spacing:-0.07px;left:425px">Settings</div>
    <div class="mi" id="m7" style="letter-spacing:-0.11px;left:481px">Help</div>
    <div class="abs" style="left:1222px;top:4px;width:52px;height:17px;border:1px solid #ebebeb;border-radius:2px"></div>
    <div class="mi" id="m8" style="left:1228px">Trusted</div>
  </div>
  <div id="jtool">
    <svg class="ico" style="left:229.5px;top:5.7px" width="14" height="14" viewBox="0 0 14 14"><path d="M1.600 2.600 A1 1 0 0 1 2.600 1.600 H10 L12.400 4 V11.400 A1 1 0 0 1 11.400 12.400 H2.600 A1 1 0 0 1 1.600 11.400 Z" fill="#5a5a5a"/><rect x="3.200" y="3" width="5.800" height="2.600" fill="#fff"/><circle cx="7" cy="9" r="1.700" fill="#fff"/></svg>
    <svg class="ico" style="left:255.5px;top:5.7px" width="14" height="14" viewBox="0 0 14 14"><path d="M7 2.400 V11.600 M2.400 7 H11.600" stroke="#5e5e5e" stroke-width="1.100"/></svg>
    <svg class="ico" style="left:281.5px;top:5.7px" width="15" height="14" viewBox="0 0 15 14"><g fill="none" stroke="#5a5a5a" stroke-width="1.300"><circle cx="3.400" cy="3.600" r="1.700"/><circle cx="3.400" cy="10.400" r="1.700"/><path d="M4.800 4.600 L13 11.600 M4.800 9.400 L13 2.400"/></g></svg>
    <svg class="ico" style="left:307.5px;top:5.7px" width="14" height="14" viewBox="0 0 14 14"><g fill="none" stroke="#5e5e5e" stroke-width="1.200"><rect x="4.400" y="3.800" width="7.400" height="9" rx="0.800"/><path d="M2.200 10.600 V2 A0.800 0.800 0 0 1 3 1.200 H9.600"/></g></svg>
    <svg class="ico" style="left:334.5px;top:4.7px" width="14" height="15" viewBox="0 0 14 15"><g fill="none" stroke="#5e5e5e" stroke-width="1.200"><rect x="2" y="3" width="10" height="10.800" rx="0.800"/></g><rect x="4.600" y="1.400" width="4.800" height="2.800" rx="0.600" fill="#5e5e5e"/></svg>
    <svg class="ico" style="left:362.5px;top:6.7px" width="12" height="12" viewBox="0 0 12 12"><path d="M3 2 L10 6 L3 10 Z" fill="#5a5a5a"/></svg>
    <svg class="ico" style="left:389.5px;top:7.7px" width="10" height="10" viewBox="0 0 10 10"><rect x="1" y="1" width="8" height="8" fill="#5a5a5a"/></svg>
    <svg class="ico" style="left:413.5px;top:5.7px" width="14" height="14" viewBox="0 0 14 14"><path d="M11.200 7 A4.200 4.200 0 1 1 9.800 3.900" fill="none" stroke="#5e5e5e" stroke-width="1.300"/><path d="M11.800 1.600 V5.600 H7.800 Z" fill="#5e5e5e"/></svg>
    <svg class="ico" style="left:439.5px;top:6.7px" width="15" height="12" viewBox="0 0 15 12"><path d="M1.600 2.400 L7 6 L1.600 9.600 Z M8 2.400 L13.400 6 L8 9.600 Z" fill="#5a5a5a"/></svg>
    <div class="mi" id="tcode" style="letter-spacing:-0.36px;left:470px;top:5px">Code</div>
    <svg class="ico" style="left:528.5px;top:7.7px" width="12" height="10" viewBox="0 0 12 10"><path d="M2.400 3.400 L6 7 L9.600 3.400" fill="none" stroke="#444" stroke-width="1.200"/></svg>
    <div class="mi" id="tlab" style="letter-spacing:-0.27px;color:#5c5c5c;left:1043px;top:5px">JupyterLab</div>
    <svg class="ico" style="left:1102px;top:6px" width="12" height="12" viewBox="0 0 12 12"><path d="M5 1.600 H1.600 V10.400 H10.400 V7" fill="none" stroke="#666" stroke-width="1"/><path d="M7 1.400 H10.600 V5 M10.600 1.400 L5.600 6.400" fill="none" stroke="#666" stroke-width="1"/></svg>
    <svg class="ico" style="left:1127px;top:6px" width="12" height="12" viewBox="0 0 12 12"><ellipse cx="6" cy="6.600" rx="2.700" ry="3.600" fill="#c4c4c4"/><path d="M1.600 4 H10.400 M1.200 6.600 H10.800 M1.600 9.200 H10.400 M4.200 2 L5 3.200 M7.800 2 L7 3.200" stroke="#c4c4c4" stroke-width="1"/></svg>
    <div class="mi" id="tker" style="letter-spacing:-0.05px;color:#3d3d3d;left:1155px;top:5px">Python 3 (ipykernel)</div>
    <svg class="ico" style="left:1262px;top:5px" width="15" height="15" viewBox="0 0 15 15"><circle cx="7.500" cy="7.500" r="5.800" fill="none" stroke="#5e5e5e" stroke-width="1.100"/></svg>
  </div>
  <div id="jmain">
    <div id="nb">
      <!-- cell 39 input tail -->
      <div class="code" style="top:-40px;height:110.500px"><pre style="top:41.100px">sns<span class="p">.</span><span class="f">countplot</span>(x<span class="o">=</span>y, palette<span class="o">=</span><span class="s">"Set2"</span>)
plt<span class="p">.</span><span class="f">title</span>(<span class="s">"Discharge Destination Distribution"</span>, fontsize<span class="o">=</span><span class="n">15</span>)
plt<span class="p">.</span><span class="f">show</span>()
</pre></div>
      <!-- output -->
      <div id="out" class="abs" style="left:20px;top:76px;width:1005px;height:272px;background:#fff;overflow:hidden">
        <svg class="ico" style="left:0;top:0" width="1005" height="272" viewBox="243 280 1005 272" font-family="DejaVu Sans,sans-serif" font-size="11.400" fill="#262626">
          <rect x="353.400" y="270" width="70" height="232.800" fill="#6dad9f"/>
          <rect x="440.500" y="270" width="70" height="232.800" fill="#f09c71"/>
          <rect x="527.600" y="354.400" width="70" height="148.400" fill="#91a3c6"/>
          <rect x="614.700" y="270" width="70" height="232.800" fill="#e29ec3"/>
          <rect x="701.800" y="286.300" width="70" height="216.500" fill="#9fc061"/>
          <path d="M345.500 270 V502.900 H781.300 V270" fill="none" stroke="#404040" stroke-width="1.150"/>
          <g stroke="#404040" stroke-width="1.150"><path d="M340.800 502.800 H345.500 M340.800 445.800 H345.500 M340.800 388.800 H345.500 M340.800 331.800 H345.500"/><path d="M388.700 502.900 V507 M475.800 502.900 V507 M562.900 502.900 V507 M650 502.900 V507 M737.100 502.900 V507"/></g>
          <g text-anchor="end"><text transform="translate(336.600 507.300) scale(1.065 1)">0</text><text transform="translate(336.600 450.300) scale(1.065 1)">5</text><text transform="translate(336.600 393.300) scale(1.065 1)">10</text><text transform="translate(336.600 336.300) scale(1.065 1)">15</text><text transform="translate(336.600 281) scale(1.065 1)">20</text></g>
          <text transform="translate(313.200 343.400) scale(1.065 1) rotate(-90)" text-anchor="middle">count</text>
          <g text-anchor="middle"><text transform="translate(388.700 520.800) scale(1.065 1)">-1.3463825122877517</text><text transform="translate(475.800 520.800) scale(1.065 1)">-0.6454741620475509</text><text transform="translate(562.900 520.800) scale(1.065 1)">0.05599927134573349</text><text transform="translate(650 520.800) scale(1.065 1)">0.7571340163163856</text><text transform="translate(737.100 520.800) scale(1.065 1)">1.4583610549783575</text><text transform="translate(562.900 538) scale(1.065 1)">destcopy</text></g>
        </svg>
        <div class="abs" style="left:0;top:0;width:1005px;height:272px;box-shadow:inset 0 0 4px 2px rgba(0,0,0,.21)"></div>
      </div>
      <!-- output scrollbar -->
      <svg class="ico" style="left:1024.300px;top:76px" width="15.700" height="275" viewBox="0 0 15.700 275"><path d="M3 11.600 L8 5.200 L13 11.600 Z" fill="#858585" stroke="#858585" stroke-width="0.800" stroke-linejoin="round"/><rect x="3.600" y="207" width="8.600" height="33" rx="4.300" fill="#8a8a8a"/><path d="M3 246.400 L8 252.800 L13 246.400 Z" fill="#858585" stroke="#858585" stroke-width="0.800" stroke-linejoin="round"/><path d="M0 258 H15.700" stroke="#ececec" stroke-width="1"/><path d="M6.800 271.600 L12.600 265.800 M10 271.800 L12.800 269" stroke="#555" stroke-width="1.100"/></svg>
      <!-- cell 40 -->
      <div class="prompt" style="top:360.100px">[40]:</div>
      <div class="code" style="top:357px;height:55.500px"><pre style="top:2.100px">y_train <span class="o">=</span> y_train<span class="p">.</span><span class="f">astype</span>(int)
y_test <span class="o">=</span> y_test<span class="p">.</span><span class="f">astype</span>(int)
</pre></div>
      <!-- cell 41 -->
      <div class="prompt" style="top:425.400px">[41]:</div>
      <div class="code" style="top:422.300px;height:118.300px"><pre style="top:2.100px"><span class="k">from</span> sklearn.linear_model <span class="k">import</span> LinearRegression

reg_model <span class="o">=</span> LinearRegression()
reg_model<span class="p">.</span><span class="f">fit</span>(X_train, y_train)

y_pred <span class="o">=</span> reg_model<span class="p">.</span><span class="f">predict</span>(X_test)
</pre></div>
      <!-- cell 42 -->
      <div class="prompt" style="top:554.300px">[42]:</div>
      <div class="code" style="top:550.100px;height:80px"><pre style="top:3.200px"><span class="k">from</span> sklearn.linear_model <span class="k">import</span> LogisticRegression
<span class="k">from</span> sklearn.metrics <span class="k">import</span> accuracy_score, classification_report, confusion_matrix
</pre></div>
    </div>
    <!-- page scrollbar -->
    <div class="abs" style="left:1485px;top:0;width:15px;height:590px;background:#fff"></div>
    <svg class="ico" style="left:1483px;top:0" width="17" height="590" viewBox="0 0 17 590"><path d="M4.800 11.600 L9.800 5.200 L14.800 11.600 Z" fill="#858585" stroke="#858585" stroke-width="0.800" stroke-linejoin="round"/><rect x="5.400" y="339" width="8.600" height="48" rx="4.300" fill="#8a8a8a"/><path d="M5.400 577 L10.400 583.400 L15.400 577 Z" fill="#858585" stroke="#858585" stroke-width="0.800" stroke-linejoin="round"/></svg>
    <!-- top shadow under toolbar -->

  </div>
</div>
<div class="abs" style="left:0;top:203px;width:1500px;height:5px;background:linear-gradient(rgba(0,0,0,.15),rgba(0,0,0,0))"></div>
<div class="abs" style="left:0;top:116px;width:1500px;height:1.200px;background:#f4faf8"></div>
<!-- window bottom edge -->
<div class="abs" style="left:0;top:791px;width:1500px;height:1px;background:rgba(255,255,255,.75)"></div>
<div class="abs" style="left:0;top:792px;width:1500px;height:1px;background:#c7d5d2"></div>
<div class="abs" style="left:0;top:793px;width:1500px;height:1px;background:#d1eae4"></div>
<!-- mouse pointers -->
<svg class="ico" style="left:220px;top:218px" width="20" height="24" viewBox="220 218 20 24"><path d="M224.400 221.900 L224.400 236.300 L228.300 233.200 L230.100 237.400 Q231.500 238.600 232.700 237 L230.600 232.700 L234.900 231.900 Z" fill="#fff" stroke="#4b4b57" stroke-width="1" stroke-linejoin="round"/></svg>
<svg class="ico" style="left:618px;top:466px" width="20" height="24" viewBox="618 466 20 24"><path d="M622.900 470.800 L622.900 483.100 L626.200 480.600 L628.200 484.400 L630 483.600 L628.200 479.900 L631.700 479.500 Z" fill="#fff" stroke="#6a4f66" stroke-width="0.800" stroke-linejoin="round"/></svg>
</body>
</html>
